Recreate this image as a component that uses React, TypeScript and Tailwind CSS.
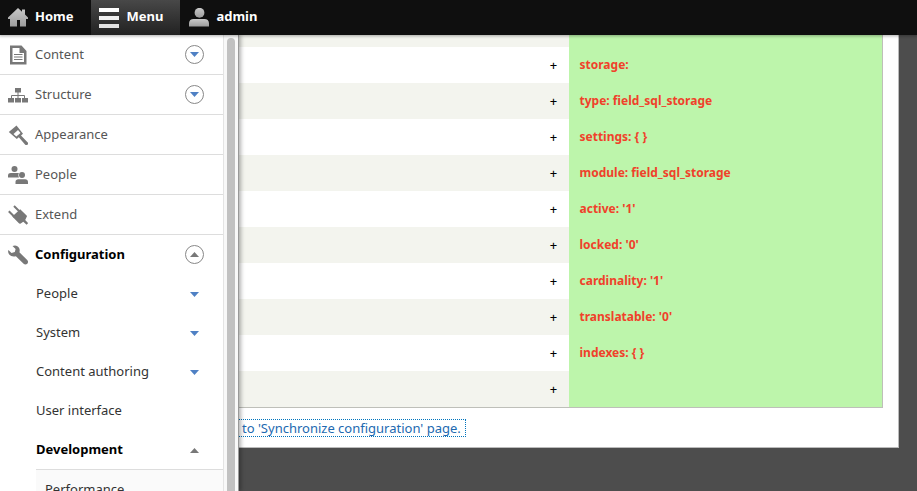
import type { ReactNode } from 'react';
import clsx from 'clsx';

interface TrayItem {
  label: string;
  icon: ReactNode;
  toggle?: 'open' | 'closed';
}

interface SubItem {
  label: string;
  toggle?: 'open' | 'closed';
}

const trayItems: TrayItem[] = [
  { label: 'Content', icon: <FileIcon />, toggle: 'closed' },
  { label: 'Structure', icon: <StructureIcon />, toggle: 'closed' },
  { label: 'Appearance', icon: <BrushIcon /> },
  { label: 'People', icon: <PeopleIcon /> },
  { label: 'Extend', icon: <PlugIcon /> },
  { label: 'Configuration', icon: <WrenchIcon />, toggle: 'open' },
];

const configItems: SubItem[] = [
  { label: 'People', toggle: 'closed' },
  { label: 'System', toggle: 'closed' },
  { label: 'Content authoring', toggle: 'closed' },
  { label: 'User interface' },
  { label: 'Development', toggle: 'open' },
];

const addedLines = [
  'storage:',
  'type: field_sql_storage',
  'settings: { }',
  'module: field_sql_storage',
  "active: '1'",
  "locked: '0'",
  "cardinality: '1'",
  "translatable: '0'",
  'indexes: { }',
  '',
];

function BarGradient({ id }: { id: string }) {
  return (
    <defs>
      <linearGradient id={id} x1="0" y1="0" x2="0" y2="1">
        <stop offset="0" stopColor="#c9c9c9" />
        <stop offset="1" stopColor="#9c9c9c" />
      </linearGradient>
    </defs>
  );
}

function HomeIcon() {
  return (
    <svg className="size-5" viewBox="0 0 20 20" aria-hidden="true">
      <BarGradient id="home-fill" />
      <path fill="url(#home-fill)" d="M10 0l4 3.700V1.500h3v5l3 3.100V11h-2v7.500h-6V12H9v6.500H2V11H0V9.600z" />
    </svg>
  );
}

function MenuIcon() {
  return (
    <svg className="size-5" viewBox="0 0 20 20" aria-hidden="true">
      <path fill="#fff" d="M0 0h20v4H0z" />
      <path fill="#f0f0f0" d="M0 8h20v4H0z" />
      <path fill="#e2e2e2" d="M0 16h20v4H0z" />
    </svg>
  );
}

function UserIcon() {
  return (
    <svg className="size-5" viewBox="0 0 20 20" aria-hidden="true">
      <BarGradient id="user-fill" />
      <g fill="url(#user-fill)">
        <ellipse cx="10.500" cy="4.800" rx="4.900" ry="5" />
        <path d="M0 18.500v-3.300C0 12.500 2 11 4.500 11h11c2.500 0 4.500 1.500 4.500 4.200v3.300z" />
      </g>
    </svg>
  );
}

function FileIcon() {
  return (
    <svg className="size-5" viewBox="0 0 20 20" fill="#787878" aria-hidden="true">
      <path fillRule="evenodd" d="M2 .5h11.500L18.500 6v13.500H2zM4.500 3v14h11.500V8h-4.500V3z" />
      <path d="M6 9h8.500v1H6zM6 11.500h8.500v1H6zM6 14h8.500v1H6z" />
    </svg>
  );
}

function StructureIcon() {
  return (
    <svg className="size-5" viewBox="0 0 20 20" fill="#787878" aria-hidden="true">
      <path d="M7 3h6v4.500H7zM0 13h6v4.500H0zM7 13h6v4.500H7zM14 13h6v4.500h-6z" />
      <path fill="none" stroke="#787878" d="M10 7v6M3.500 13v-2.500h13V13" />
    </svg>
  );
}

function BrushIcon() {
  return (
    <svg className="size-5" viewBox="0 0 20 20" fill="#787878" aria-hidden="true">
      <path fillRule="evenodd" d="M8.500.5 15 8.800l-2 1.700 6.500 6.700c1 1 .9 2-.1 2.600-1 .7-1.700.5-2.400-.3L10.800 12.300 8.800 14 .8 7zM10 5 5.500 9l2.800 2.500L12.500 8z" />
    </svg>
  );
}

function PeopleIcon() {
  return (
    <svg className="size-5" viewBox="0 0 20 20" fill="#787878" aria-hidden="true">
      <circle cx="6.500" cy="4" r="3" />
      <path d="M0 12.500v-2C0 8.800 1.200 8 2.800 8h6.700c.6 0 1 .1 1.400.3-.8 1.200-.7 2.800.1 4.200z" />
      <circle cx="14" cy="10" r="3" />
      <path d="M7.500 19v-2.200c0-1.700 1.200-2.600 2.800-2.600h6.900c1.600 0 2.800.9 2.800 2.600V19z" />
    </svg>
  );
}

function PlugIcon() {
  return (
    <svg className="size-5" viewBox="0 0 20 20" fill="#787878" aria-hidden="true">
      <path d="m12.200 4.300 6.400 6.300c.5.500.4 1 0 1.500l-1.400 3 2.900 3.100-1.500 1.600-3.300-3-2.600 1.600c-.6.500-1.300.4-1.800-.1l-6.600-6.700z" />
      <path fill="none" stroke="#787878" strokeWidth="2" d="m6 1 6 6M.8 6.200l6 6" />
    </svg>
  );
}

function WrenchIcon() {
  return (
    <svg className="size-5" viewBox="0 0 20 20" fill="#787878" aria-hidden="true">
      <path d="M4.500 1C7.200-.2 9.900.6 11.100 3c.7 1.500.8 3 .3 4.300l7.800 7.700c1.100 1.100 1.100 2.700.1 3.700-1.100 1.100-2.700 1.100-3.700 0l-7.700-7.500c-2.600.8-5.100.2-6.700-1.600C0 8.200-.1 6.400.4 4.900L3.500 7.900 6.800 7l.8-3z" />
    </svg>
  );
}

function Caret({ state }: { state: 'open' | 'closed' }) {
  return (
    <svg className="block h-[5px] w-[9px]" viewBox="0 0 9 5" aria-hidden="true">
      {state === 'open' ? (
        <path fill="#787878" d="M4.500 0 9 5H0z" />
      ) : (
        <path fill="#4f80c4" d="M0 0h9L4.500 5z" />
      )}
    </svg>
  );
}

function Toolbar() {
  return (
    <nav className="relative z-20 flex h-[35px] shrink-0 bg-[#0f0f0f] text-[13px] font-bold text-white shadow-[0_0_3px_1px_rgba(0,0,0,0.33)]">
      <a href="#home" className="flex items-center gap-[7px] pr-[17px] pl-2">
        <HomeIcon />
        <span className="pb-[3px]">Home</span>
      </a>
      <button type="button" className="flex items-center gap-2 bg-gradient-to-b from-[#484848] to-[#222] pr-[17px] pl-2">
        <MenuIcon />
        <span className="pb-[3px]">Menu</span>
      </button>
      <button type="button" className="flex items-center gap-[7px] px-[9px]">
        <UserIcon />
        <span className="pb-[3px]">admin</span>
      </button>
    </nav>
  );
}

function Tray() {
  return (
    <aside className="absolute inset-y-0 left-0 z-10 flex w-[239px] border-r border-[#999] bg-white shadow-[2px_0_4px_rgba(0,0,0,0.3)]">
      <div className="min-w-0 flex-1 overflow-hidden">
        <ul>
          {trayItems.map((item) => {
            const open = item.toggle === 'open';
            return (
              <li
                key={item.label}
                className={clsx(
                  'flex items-center pr-[19px] pl-2',
                  open ? 'h-[39px]' : 'h-10 border-b border-[#ddd]',
                )}
              >
                <a
                  href="#section"
                  className={clsx('flex flex-1 items-center gap-[7px]', open ? 'font-bold text-black' : 'text-[#565656]')}
                >
                  {item.icon}
                  <span className="pb-[2px]">{item.label}</span>
                </a>
                {item.toggle && (
                  <button
                    type="button"
                    aria-label={`Toggle ${item.label}`}
                    className="flex size-[19px] items-center justify-center rounded-full border border-[#888]"
                  >
                    <Caret state={item.toggle} />
                  </button>
                )}
              </li>
            );
          })}
        </ul>
        <ul className="pl-9">
          {configItems.map((item) => (
            <li key={item.label} className="flex h-[39px] items-center pr-6">
              <a
                href="#config"
                className={clsx('flex-1 pb-[2px]', item.toggle === 'open' ? 'font-bold text-black' : 'text-[#333]')}
              >
                {item.label}
              </a>
              {item.toggle && (
                <button type="button" aria-label={`Toggle ${item.label}`} className="pt-[2px]">
                  <Caret state={item.toggle} />
                </button>
              )}
            </li>
          ))}
          <li className="flex h-10 items-center border-t border-[#ddd] bg-[#fafafa] pb-[2px] pl-[9px] text-[#333]">
            <a href="#performance">Performance</a>
          </li>
        </ul>
      </div>
      {/* scroll track */}
      <div className="w-[15px] border-l border-[#e4e4e4] bg-[#f8f8f8] pt-[3px] pl-[3px]">
        <div className="h-full w-2 rounded-t-full bg-[#c1c1c1]" />
      </div>
    </aside>
  );
}

function DiffTable() {
  return (
    <table className="w-full table-fixed border-collapse border-r border-b border-[#bebfb9]">
      <colgroup>
        <col />
        <col className="w-[30px]" />
        <col className="w-[314px]" />
      </colgroup>
      <tbody>
        <tr className="h-3 bg-[#f3f4ee]">
          <td />
          <td />
          <td className="bg-[#bdf5ab]" />
        </tr>
        {addedLines.map((line, i) => (
          <tr key={i} className="h-9 odd:bg-[#f3f4ee]">
            <td />
            <td className="text-center font-medium text-black">+</td>
            <td className="bg-[#bdf5ab] pl-[11px] text-xs font-bold text-[#f0412a]">{line}</td>
          </tr>
        ))}
      </tbody>
    </table>
  );
}

export default function App() {
  return (
    <div className="flex h-screen flex-col overflow-hidden bg-[#4d4d4d] font-['Noto_Sans','Open_Sans',sans-serif] text-[13px] leading-[18px]">
      <Toolbar />
      <div className="relative flex-1 pr-[18px] pl-[239px]">
        <Tray />
        <main className="border-r border-b border-[#bbb] bg-white pr-[15px] pb-[10px]">
          <DiffTable />
          <div className="flex pt-[11px]">
            <a href="#sync" className="border border-l-0 border-dotted border-[#0074bd] pr-1 pl-[3px] leading-4 text-[#2169b0]">
              to 'Synchronize configuration' page.
            </a>
          </div>
        </main>
      </div>
    </div>
  );
}
